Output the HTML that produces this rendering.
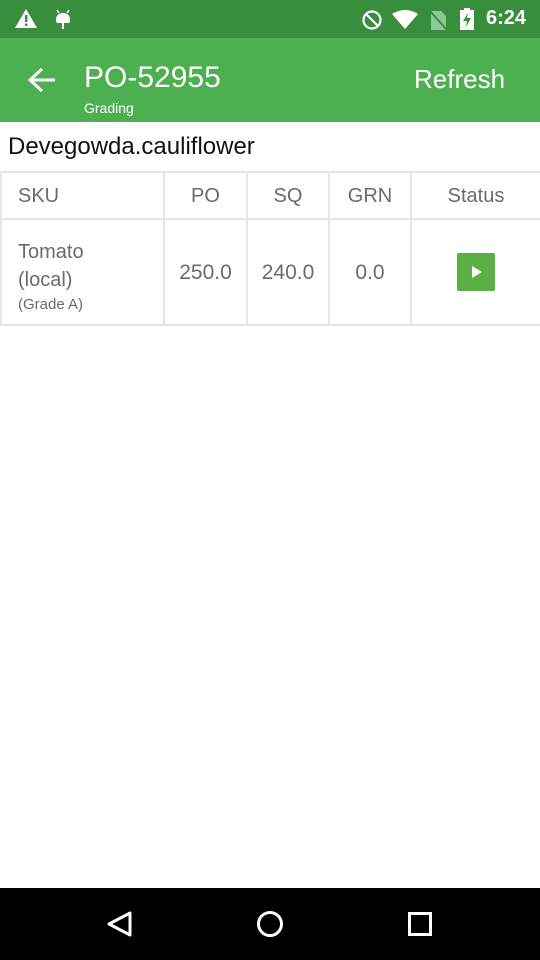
<!DOCTYPE html>
<html><head><style>
*{margin:0;padding:0;box-sizing:border-box}
body{width:540px;height:960px;position:relative;background:#fff;font-family:"Liberation Sans",sans-serif;overflow:hidden}
.a{position:absolute}
.c{position:absolute;display:flex;align-items:center;justify-content:center;color:#6b6b6b}
.b{position:absolute;background:#e6e6e6}
</style></head><body>
<div class="a" style="left:0;top:0;width:540px;height:38px;background:#388e3c"></div>
<svg class="a" style="left:14px;top:8px" width="24" height="22" viewBox="0 0 24 22"><path d="M12 1L23 20H1Z" fill="#fff"/><rect x="11" y="7" width="2.4" height="7" fill="#388e3c"/><rect x="11" y="15.5" width="2.4" height="2.4" fill="#388e3c"/></svg>
<svg class="a" style="left:54px;top:7px" width="18" height="24" viewBox="0 0 18 24"><path d="M3 3l2 3M15 3l-2 3" stroke="#fff" stroke-width="1.5"/><path d="M2 12a7 6 0 0 1 14 0v2H2z" fill="#fff"/><rect x="2" y="12" width="14" height="4" rx="2" fill="#fff"/><rect x="8" y="16" width="2" height="6" fill="#fff"/></svg>
<svg class="a" style="left:361px;top:9px" width="22" height="22" viewBox="0 0 22 22"><circle cx="11" cy="11" r="8.5" fill="none" stroke="#fff" stroke-width="2.2"/><path d="M5 5L17 17" stroke="#fff" stroke-width="2.2"/></svg>
<svg class="a" style="left:391px;top:10px" width="28" height="20" viewBox="0 0 28 20"><path d="M1 4Q14 -4 27 4L14 19Z" fill="#fff"/></svg>
<svg class="a" style="left:428px;top:9px" width="20" height="22" viewBox="0 0 20 22"><path d="M3 2h10l5 5v14H3z" fill="#8fc79a"/><path d="M1 1L19 21" stroke="#388e3c" stroke-width="2"/></svg>
<svg class="a" style="left:459px;top:7px" width="16" height="24" viewBox="0 0 16 24"><rect x="5" y="1" width="6" height="3" fill="#fff"/><rect x="1" y="3" width="14" height="20" fill="#fff"/><path d="M9 6L4 14h4l-1 6 5-9H8z" fill="#388e3c"/></svg>
<div class="a" style="left:486px;top:7px;color:#fff;font-size:20px;font-weight:bold">6:24</div>
<div class="a" style="left:0;top:38px;width:540px;height:84px;background:#4caf50"></div>
<svg class="a" style="left:26px;top:66px" width="32" height="28" viewBox="0 0 32 28"><path d="M29 14H5M16 3L4 14l12 11" fill="none" stroke="#fff" stroke-width="3"/></svg>
<div class="a" style="left:84px;top:61px;color:#fff;font-size:30px">PO-52955</div>
<div class="a" style="left:84px;top:100px;color:#fff;font-size:14px">Grading</div>
<div class="a" style="left:414px;top:64px;color:#fff;font-size:26px">Refresh</div>
<div class="a" style="left:8px;top:133px;color:#111;font-size:24px">Devegowda.cauliflower</div>
<div class="b" style="left:0;top:171px;width:540px;height:2px"></div>
<div class="b" style="left:0;top:218px;width:540px;height:2px"></div>
<div class="b" style="left:0;top:324px;width:540px;height:2px"></div>
<div class="b" style="left:0;top:171px;width:2px;height:155px"></div>
<div class="b" style="left:163px;top:171px;width:2px;height:155px"></div>
<div class="b" style="left:246px;top:171px;width:2px;height:155px"></div>
<div class="b" style="left:328px;top:171px;width:2px;height:155px"></div>
<div class="b" style="left:410px;top:171px;width:2px;height:155px"></div>
<div class="c" style="left:18px;top:174px;height:45px;font-size:20px">SKU</div>
<div class="c" style="left:165px;top:174px;width:81px;height:45px;font-size:20px">PO</div>
<div class="c" style="left:248px;top:174px;width:80px;height:45px;font-size:20px">SQ</div>
<div class="c" style="left:330px;top:174px;width:80px;height:45px;font-size:20px">GRN</div>
<div class="c" style="left:412px;top:174px;width:128px;height:45px;font-size:20px">Status</div>
<div class="a" style="left:18px;top:238px;color:#6b6b6b;font-size:20px;line-height:28px">Tomato<br>(local)</div>
<div class="a" style="left:18px;top:296px;color:#6b6b6b;font-size:15px">(Grade A)</div>
<div class="c" style="left:165px;top:221px;width:81px;height:104px;font-size:21px">250.0</div>
<div class="c" style="left:248px;top:221px;width:80px;height:104px;font-size:21px">240.0</div>
<div class="c" style="left:330px;top:221px;width:80px;height:104px;font-size:21px">0.0</div>
<div class="a" style="left:457px;top:253px;width:38px;height:38px;background:#5aaf45;border-radius:2px"></div>
<svg class="a" style="left:457px;top:253px" width="38" height="38" viewBox="0 0 38 38"><path d="M15 13v12l10-6z" fill="#fff"/></svg>
<div class="a" style="left:0;top:888px;width:540px;height:72px;background:#000"></div>
<svg class="a" style="left:100px;top:904px" width="340" height="40" viewBox="0 0 340 40"><path d="M30 9L9 20l21 11z" fill="none" stroke="#fff" stroke-width="3" stroke-linejoin="round"/><circle cx="170" cy="20" r="11.5" fill="none" stroke="#fff" stroke-width="3"/><rect x="309.5" y="9.5" width="21" height="21" fill="none" stroke="#fff" stroke-width="3"/></svg>
</body></html>
